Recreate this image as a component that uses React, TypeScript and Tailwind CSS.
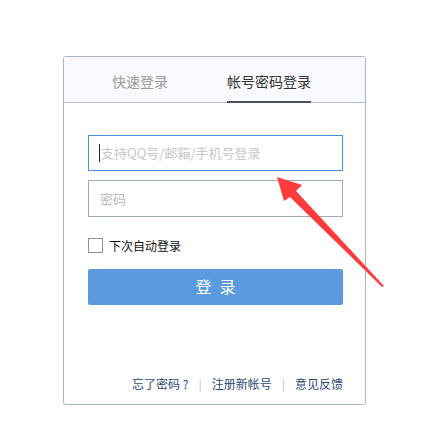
export default function App() {
  const font = { fontFamily: '"Microsoft YaHei", "Noto Sans CJK SC", "Noto Sans", sans-serif' };
  return (
    <div className="relative w-[438px] h-[422px] bg-white pt-[56px] pl-[63px]" style={font}>
      <div className="w-[303px] h-[349px] border border-[#a9b5c6] rounded-[3px] bg-white flex flex-col overflow-hidden">
        {/* tabs */}
        <div className="h-[46px] bg-[#f8f9fc] border-b border-[#b3c0d1] flex items-end pl-[48px] gap-[59px] shrink-0">
          <div className="h-[45px] flex items-center text-[14px] text-[#9a9a9a] leading-none pt-[2px]">快速登录</div>
          <div className="h-[45px] flex items-center text-[14px] text-[#333] leading-none pt-[2px] border-b-[2px] border-[#4a5260] -mb-[1px]">
            帐号密码登录
          </div>
        </div>

        <div className="pl-[24px] pt-[32px] flex flex-col">
          <div className="w-[255px] h-[36px] border border-[#4a90e2] flex items-center pl-[10px]">
            <span className="w-px h-[18px] bg-[#222] mr-[1px]" />
            <span className="text-[13px] text-[#c8c8c8]">支持QQ号/邮箱/手机号登录</span>
          </div>
          <div className="w-[255px] h-[37px] mt-[9px] border border-[#9fabbb] flex items-center pl-[11px]">
            <span className="text-[13px] text-[#b8b8b8]">密码</span>
          </div>
          <div className="flex items-center mt-[21px] h-[15px]">
            <span className="w-[15px] h-[15px] border border-[#8a8f98] bg-white" />
            <span className="ml-[6px] text-[12px] text-[#111] leading-none">下次自动登录</span>
          </div>
          <div className="w-[255px] h-[36px] mt-[16px] bg-[#5b9ade] rounded-[2px] flex items-center justify-center text-white text-[16px] leading-none tracking-[8px] pl-[8px] pb-[2px]">
            登录
          </div>
        </div>

        <div className="mt-auto mb-[14px] flex items-center justify-end pr-[22px] text-[12px] text-[#2d4a7a] leading-none">
          <span>忘了密码 ?</span>
          <span className="mx-[10px] text-[#b8c4d4]">|</span>
          <span>注册新帐号</span>
          <span className="mx-[10px] text-[#b8c4d4]">|</span>
          <span>意见反馈</span>
        </div>
      </div>

      <svg className="absolute left-0 top-0" width="438" height="422" viewBox="0 0 438 422">
        <polygon
          points="277,177 302,185 296,191 384,286 382,287 290,197 284,201"
          fill="#ff3b3b"
        />
      </svg>
    </div>
  );
}
